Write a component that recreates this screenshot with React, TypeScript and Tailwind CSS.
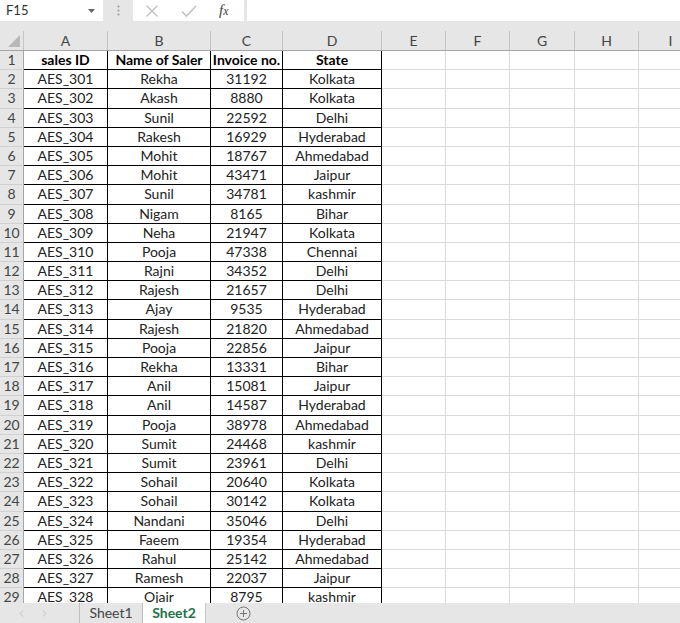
import { ChevronLeft, ChevronRight } from 'lucide-react'

const rows: [string, string, string, string][] = [
  ['AES_301', 'Rekha', '31192', 'Kolkata'],
  ['AES_302', 'Akash', '8880', 'Kolkata'],
  ['AES_303', 'Sunil', '22592', 'Delhi'],
  ['AES_304', 'Rakesh', '16929', 'Hyderabad'],
  ['AES_305', 'Mohit', '18767', 'Ahmedabad'],
  ['AES_306', 'Mohit', '43471', 'Jaipur'],
  ['AES_307', 'Sunil', '34781', 'kashmir'],
  ['AES_308', 'Nigam', '8165', 'Bihar'],
  ['AES_309', 'Neha', '21947', 'Kolkata'],
  ['AES_310', 'Pooja', '47338', 'Chennai'],
  ['AES_311', 'Rajni', '34352', 'Delhi'],
  ['AES_312', 'Rajesh', '21657', 'Delhi'],
  ['AES_313', 'Ajay', '9535', 'Hyderabad'],
  ['AES_314', 'Rajesh', '21820', 'Ahmedabad'],
  ['AES_315', 'Pooja', '22856', 'Jaipur'],
  ['AES_316', 'Rekha', '13331', 'Bihar'],
  ['AES_317', 'Anil', '15081', 'Jaipur'],
  ['AES_318', 'Anil', '14587', 'Hyderabad'],
  ['AES_319', 'Pooja', '38978', 'Ahmedabad'],
  ['AES_320', 'Sumit', '24468', 'kashmir'],
  ['AES_321', 'Sumit', '23961', 'Delhi'],
  ['AES_322', 'Sohail', '20640', 'Kolkata'],
  ['AES_323', 'Sohail', '30142', 'Kolkata'],
  ['AES_324', 'Nandani', '35046', 'Delhi'],
  ['AES_325', 'Faeem', '19354', 'Hyderabad'],
  ['AES_326', 'Rahul', '25142', 'Ahmedabad'],
  ['AES_327', 'Ramesh', '22037', 'Jaipur'],
  ['AES_328', 'Ojair', '8795', 'kashmir'],
]

const tableCols = ['w-[84px]', 'w-[103px]', 'w-[72px]', 'w-[99px]']
const emptyCols = ['w-[64px]', 'w-[64px]', 'w-[65px]', 'w-[64px]', 'w-[64px]']
const letters = ['A', 'B', 'C', 'D', 'E', 'F', 'G', 'H', 'I']
const allCols = [...tableCols, ...emptyCols]

function RowHead({ n }: { n: number }) {
  return (
    <div className="w-[24px] shrink-0 bg-[#e6e6e6] border-r border-r-[#a6a6a6] border-b border-b-[#d0d0d0] text-[#444] text-center">
      {n}
    </div>
  )
}

function Row({ n, cells, bold }: { n: number; cells: string[]; bold?: boolean }) {
  return (
    <div className="flex h-[19.2px] leading-[18.5px] shrink-0">
      <RowHead n={n} />
      {cells.map((c, i) => (
        <div
          key={i}
          className={`${tableCols[i]} shrink-0 border-r border-b border-black text-center text-[#222] whitespace-nowrap overflow-hidden ${bold ? 'font-bold text-black' : ''}`}
        >
          {c}
        </div>
      ))}
      {emptyCols.map((w, i) => (
        <div key={i} className={`${w} shrink-0 border-r border-b border-[#dadada]`} />
      ))}
    </div>
  )
}

export default function App() {
  return (
    <div
      className="w-[680px] h-[623px] flex flex-col overflow-hidden bg-white text-[14px]"
      style={{ fontFamily: 'Lato, "Open Sans", sans-serif' }}
    >
      {/* formula bar */}
      <div className="h-[31px] shrink-0 bg-[#e6e6e6] flex items-start">
        <div className="w-[103px] h-[21px] bg-white flex items-center justify-between pl-[6px] pr-[8px] text-[13px] text-[#333]">
          <span>F15</span>
          <svg width="7" height="4" viewBox="0 0 7 4">
            <path d="M0 0 L7 0 L3.5 4 Z" fill="#666" />
          </svg>
        </div>
        <div className="w-[30px] h-[21px] flex items-center justify-center">
          <svg width="3" height="11" viewBox="0 0 3 11">
            <circle cx="1.5" cy="1.5" r="1" fill="#999" />
            <circle cx="1.5" cy="5.5" r="1" fill="#999" />
            <circle cx="1.5" cy="9.5" r="1" fill="#999" />
          </svg>
        </div>
        <div className="w-[111px] h-[21px] bg-white flex items-center pl-[12px] gap-[22px]">
          <svg width="14" height="14" viewBox="0 0 14 14">
            <path d="M1.5 1.5 L12.5 12.5 M12.5 1.5 L1.5 12.5" stroke="#c2c2c2" strokeWidth="1.4" />
          </svg>
          <svg width="16" height="14" viewBox="0 0 16 14">
            <path d="M1 7.5 L5.5 12 L15 2" stroke="#c2c2c2" strokeWidth="1.6" fill="none" />
          </svg>
          <span
            className="italic text-[15px] text-[#444] leading-none"
            style={{ fontFamily: '"Liberation Serif", serif' }}
          >
            f<span className="text-[12px]">x</span>
          </span>
        </div>
        <div className="w-[3px]" />
        <div className="flex-1 h-[21px] bg-white" />
      </div>

      {/* grid */}
      <div className="flex-1 overflow-hidden flex flex-col">
        <div className="flex h-[20px] shrink-0 bg-[#e6e6e6] border-b border-b-[#a6a6a6] leading-[19px] text-[#444]">
          <div className="w-[24px] shrink-0 border-r border-r-[#c4c4c4] relative">
            <svg className="absolute right-[3px] bottom-[3px]" width="12" height="12" viewBox="0 0 12 12">
              <path d="M12 0 L12 12 L0 12 Z" fill="#b8b8b8" />
            </svg>
          </div>
          {allCols.map((w, i) => (
            <div key={i} className={`${w} shrink-0 border-r border-r-[#c4c4c4] text-center`}>
              {letters[i]}
            </div>
          ))}
        </div>
        <Row n={1} cells={['sales ID', 'Name of Saler', 'Invoice no.', 'State']} bold />
        {rows.map((r, i) => (
          <Row key={i} n={i + 2} cells={r} />
        ))}
      </div>

      {/* sheet tabs */}
      <div className="h-[20px] shrink-0 bg-[#e6e6e6] flex items-stretch text-[14px] leading-[19px]">
        <div className="w-[80px] flex items-center pl-[16px] gap-[12px] border-r border-r-[#bdbdbd] text-[#c0c0c0]">
          <ChevronLeft size={11} strokeWidth={2} />
          <ChevronRight size={11} strokeWidth={2} />
        </div>
        <div className="w-[63px] text-center text-[#444] border-r border-r-[#bdbdbd]">Sheet1</div>
        <div className="w-[62px] text-center bg-white text-[#217346] font-bold">Sheet2</div>
        <div className="w-[75px] flex items-center justify-center border-l border-l-[#c8c8c8]">
          <svg width="15" height="15" viewBox="0 0 15 15">
            <circle cx="7.5" cy="7.5" r="6.5" stroke="#777" strokeWidth="1" fill="none" />
            <path d="M7.5 4 V11 M4 7.5 H11" stroke="#777" strokeWidth="1" />
          </svg>
        </div>
      </div>
    </div>
  )
}
